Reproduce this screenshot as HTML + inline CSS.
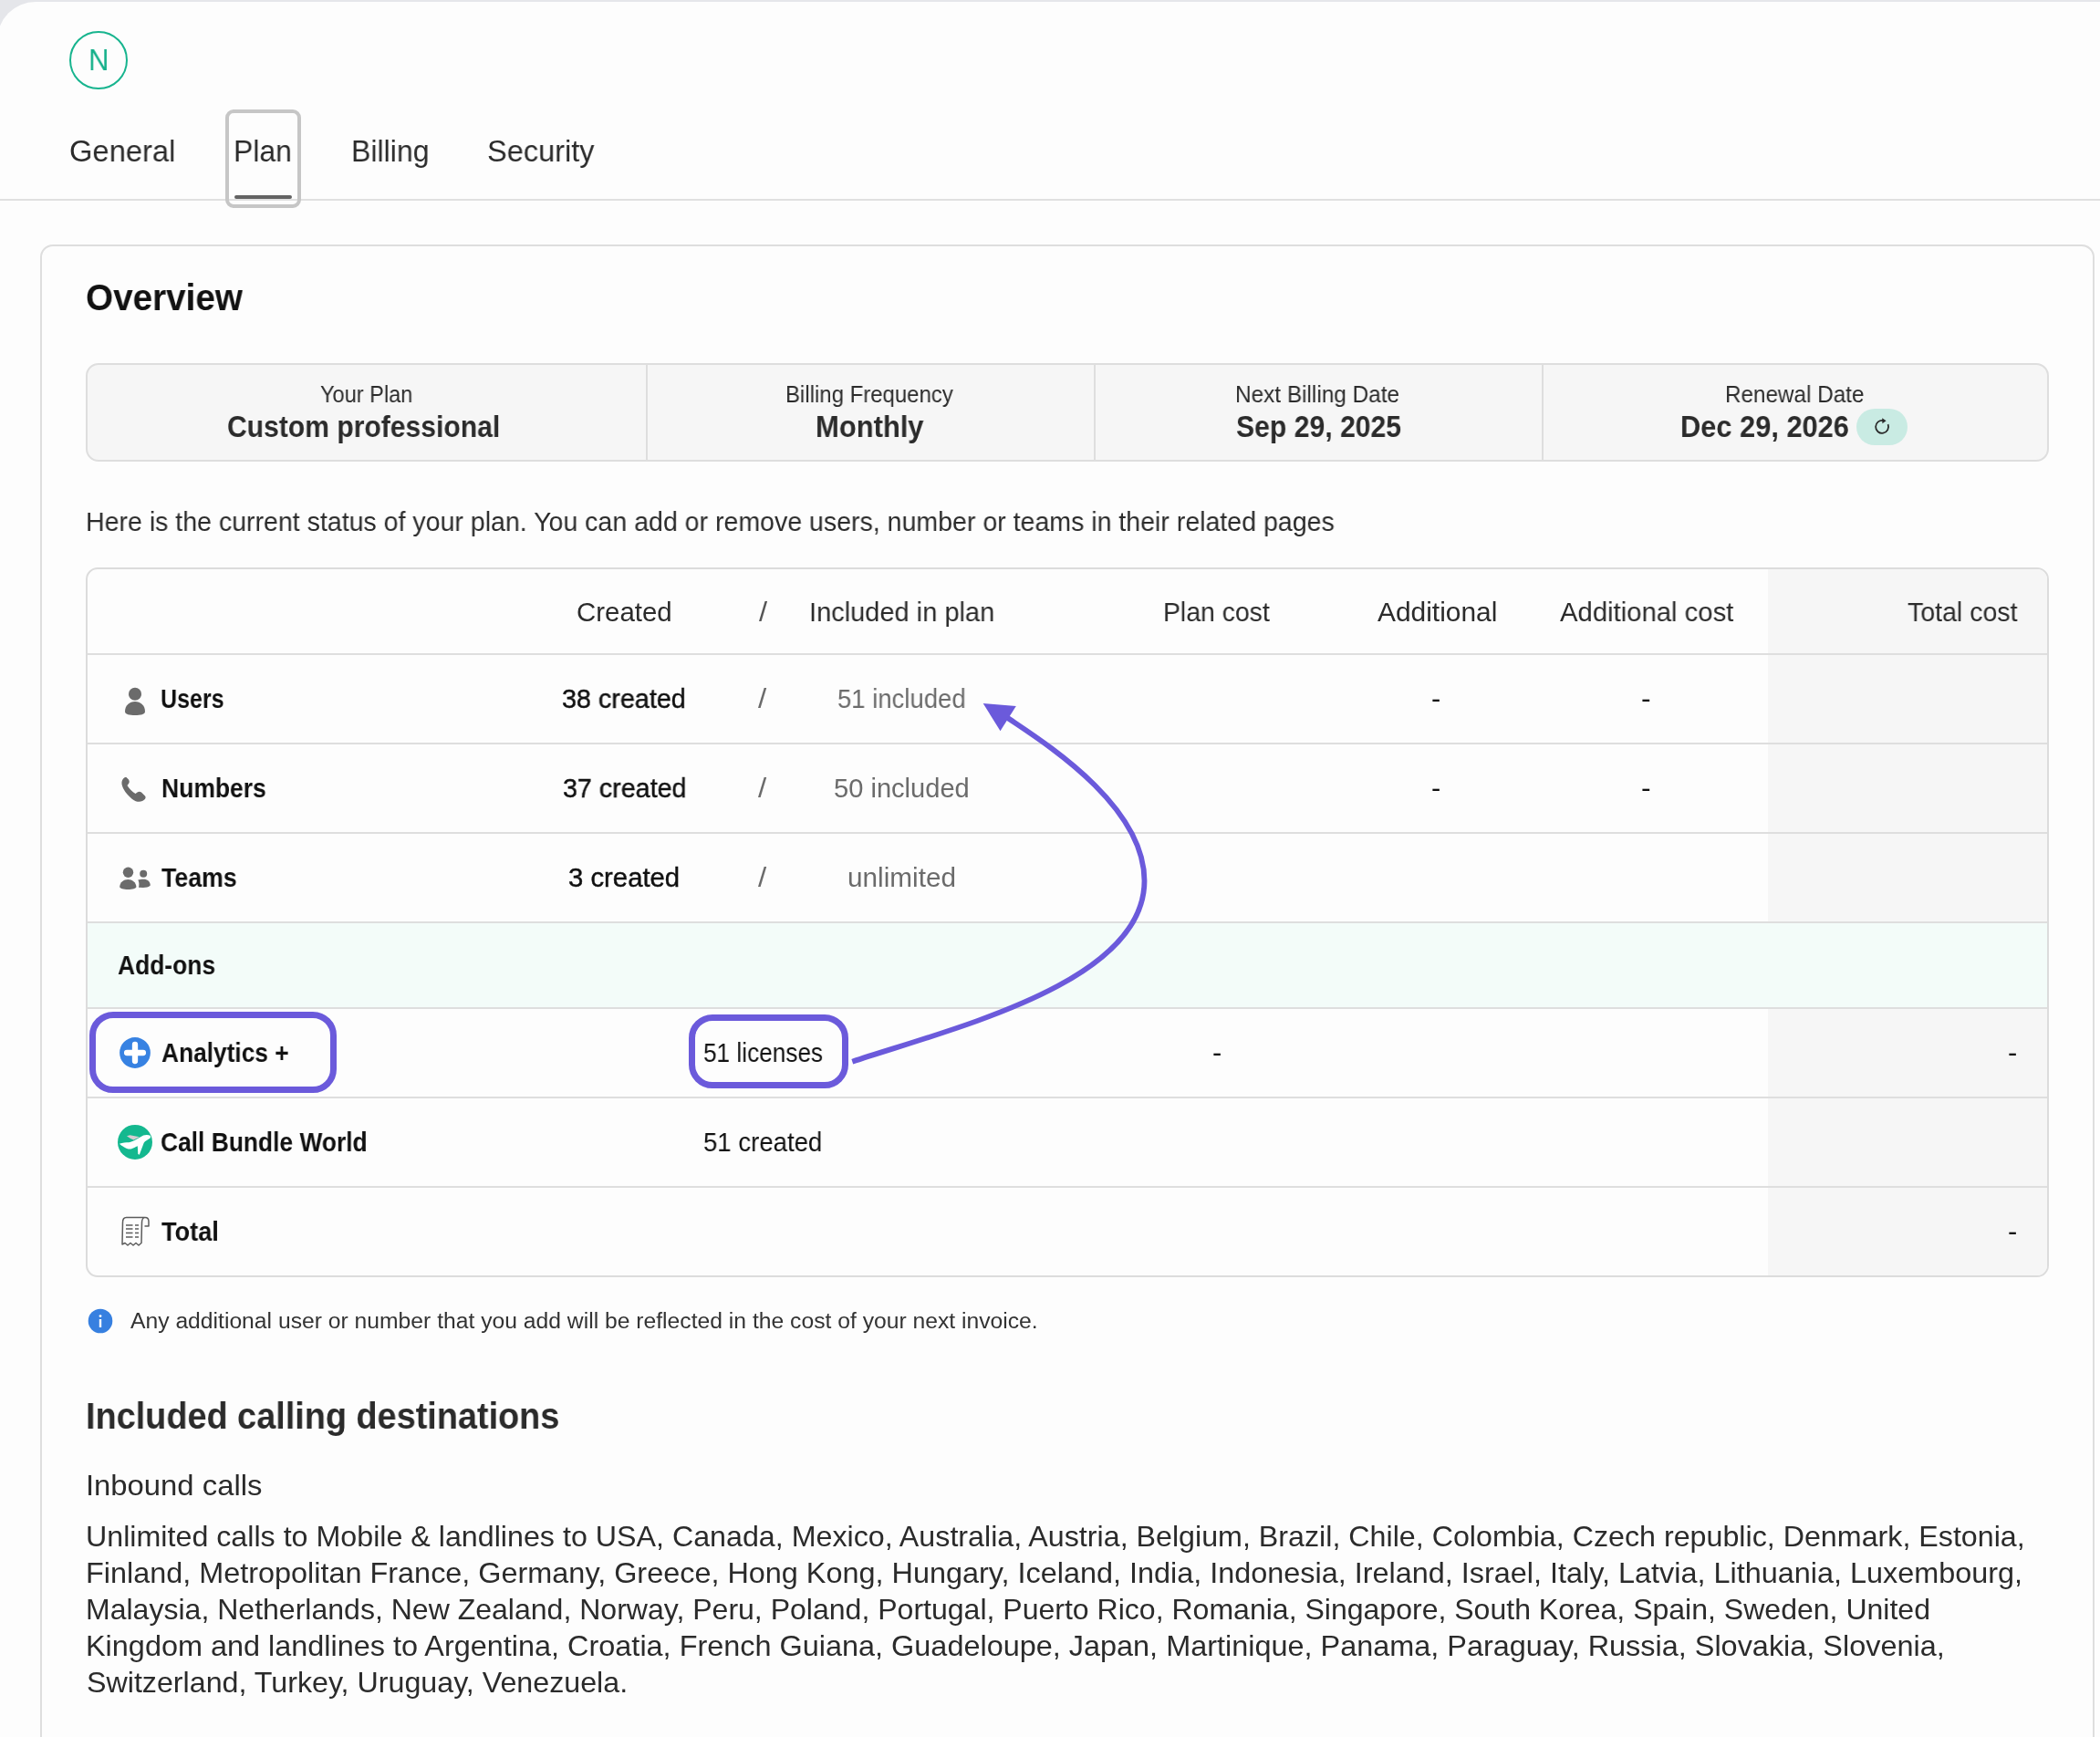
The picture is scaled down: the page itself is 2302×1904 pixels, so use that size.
<!DOCTYPE html>
<html><head><meta charset="utf-8">
<style>
html,body{margin:0;padding:0;}
body{width:2302px;height:1904px;position:relative;overflow:hidden;background:#e5e6ea;font-family:"Liberation Sans",sans-serif;}
.win{position:absolute;left:-3px;top:2px;width:2305px;height:1902px;background:#fdfdfd;border-top-left-radius:42px;overflow:hidden;}
.abs{position:absolute;}
.t{position:absolute;white-space:nowrap;transform-origin:0 0;will-change:transform;font-family:"Liberation Sans",sans-serif;}
.hl{position:absolute;height:2px;background:#dedede;}
</style></head><body>
<div class="win"></div>
<!-- avatar -->
<div class="abs" style="left:76px;top:34px;width:60px;height:60px;border:2px solid #17b48e;border-radius:50%;"></div>
<!-- tab divider -->
<div class="hl" style="left:0;top:218px;width:2302px;background:#e0e0e0;"></div>
<!-- focus box -->
<div class="abs" style="left:247px;top:120px;width:75px;height:100px;border:4px solid #c6c6c6;border-radius:9px;"></div>
<div class="abs" style="left:257px;top:214px;width:63px;height:4px;background:#636363;border-radius:2px;"></div>
<!-- outer card -->
<div class="abs" style="left:44px;top:268px;width:2248px;height:1700px;border:2px solid #dedede;border-radius:14px;"></div>
<!-- summary box -->
<div class="abs" style="left:94px;top:398px;width:2148px;height:104px;border:2px solid #dedede;border-radius:14px;background:#f6f6f6;"></div>
<div class="abs" style="left:708px;top:400px;width:2px;height:104px;background:#dedede;"></div>
<div class="abs" style="left:1199px;top:400px;width:2px;height:104px;background:#dedede;"></div>
<div class="abs" style="left:1690px;top:400px;width:2px;height:104px;background:#dedede;"></div>
<!-- badge -->
<div class="abs" style="left:2035px;top:448px;width:56px;height:40px;border-radius:20px;background:#c9ebe3;"></div>
<svg class="abs" style="left:2043px;top:448px" width="40" height="40" viewBox="0 0 40 40">
  <path d="M26.6,17.2 A7,7 0 1 1 21.6,13.0" fill="none" stroke="#2a2a2a" stroke-width="1.8"/>
  <path d="M20.2,10.2 L24.6,13.3 L20.4,16.2 Z" fill="#2a2a2a"/>
</svg>
<!-- table -->
<div class="abs" style="left:94px;top:622px;width:2148px;height:774px;border:2px solid #dcdcdc;border-radius:13px;overflow:hidden;background:#fdfdfd;">
  <div class="abs" style="left:1842px;top:0;width:306px;height:774px;background:#f6f6f6;"></div>
  <div class="abs" style="left:0;top:388px;width:2148px;height:92px;background:#f3fcf9;"></div>
  <div class="hl" style="left:0;top:92px;width:2148px;"></div>
  <div class="hl" style="left:0;top:190px;width:2148px;"></div>
  <div class="hl" style="left:0;top:288px;width:2148px;"></div>
  <div class="hl" style="left:0;top:386px;width:2148px;"></div>
  <div class="hl" style="left:0;top:480px;width:2148px;"></div>
  <div class="hl" style="left:0;top:578px;width:2148px;"></div>
  <div class="hl" style="left:0;top:676px;width:2148px;"></div>
</div>
<!-- icons -->
<svg class="abs" style="left:0;top:0" width="2302" height="1904" viewBox="0 0 2302 1904">
  <!-- user -->
  <circle cx="148" cy="760.7" r="7" fill="#6b6b6b"/>
  <path d="M137,780 C137,773 142,769 148,769 C154,769 159,773 159,780 C159,783 154,784 148,784 C142,784 137,783 137,780 Z" fill="#6b6b6b"/>
  <!-- phone -->
  <path d="M137,852 C134.5,853.5 133,856 133.5,859.5 C134.5,865 139,871 145,876 C149,879 153,879.5 156,878 C159,876.5 160.5,874.5 159,872.5 L155,868.5 C153.5,867.5 152,867.5 150.5,868.5 L148.5,870 C145,868 141.5,864.5 139.5,861 L141,859 C142,857.5 142,856 141,854.5 L138.5,852 Z" fill="#6b6b6b"/>
  <!-- teams -->
  <circle cx="140.5" cy="956.2" r="5.7" fill="#6b6b6b"/>
  <path d="M131.2,972 C131.5,967 135.5,964 140.3,964 C145,964 149,967 149.4,972 C149.4,974 145,975 140.3,975 C135.5,975 131.2,974 131.2,972 Z" fill="#6b6b6b"/>
  <circle cx="157.2" cy="957.7" r="4" fill="#6b6b6b"/>
  <path d="M151.3,964.5 C153,964 155,963.8 157.5,963.8 C161.5,963.8 164.8,966.5 164.8,970.5 C163,972.3 160,973 157,973 L152,972.8 C152.8,970 152.5,966.5 151.3,964.5 Z" fill="#6b6b6b"/>
  <!-- plus circle -->
  <circle cx="148" cy="1154" r="16.9" fill="#3782e2"/>
  <path d="M148,1145 V1163 M139.1,1154 H156.9" stroke="#fff" stroke-width="6.3" stroke-linecap="round"/>
  <!-- plane circle -->
  <circle cx="148" cy="1251.9" r="19" fill="#14b88f"/>
  <path d="M139,1245.3 L142.5,1244.3 L152.8,1246.3 L146.5,1249.6 L143,1248 Z" fill="#d9cdd2"/>
  <path d="M130.9,1253.8 C134.5,1252.5 138,1252.3 141.2,1252.3 C144,1252 146.5,1250.5 148.8,1249.3 L157.2,1244.4 C160,1243.6 163,1243.7 165,1244.9 L165,1247.2 C163,1248.5 161,1250 158.9,1251.3 L157.7,1252.8 L152.8,1265.7 L151.3,1265 L150.8,1256.3 C148.5,1257.3 146,1258.8 143.7,1259.4 C140.8,1259.8 138,1258.5 136.1,1257.4 C134.2,1256.3 132.3,1255.2 130.9,1253.8 Z" fill="#fff"/>
  <!-- receipt -->
  <g fill="none" stroke="#5c5c5c" stroke-width="1.5" stroke-linejoin="round">
    <path d="M159,1334.5 L138.5,1334.5 C135.5,1334.5 134.5,1337 134.5,1340 L134,1364 L137,1362.5 L140,1365 L143,1362.5 L146,1365 L149,1362.5 L152,1365 L155,1362.5 L155.5,1340 C155.5,1337 157,1334.5 159,1334.5 C161.5,1334.5 163,1336 163,1339 L163,1344 L158.5,1344"/>
    <path d="M138,1343 H145.5 M148,1343 H152 M138,1347 H145.5 M148,1347 H152 M138,1351.5 H145.5 M148,1351.5 H152 M138,1356 H145.5 M148,1356 H152" stroke-width="1.4"/>
  </g>
  <!-- info -->
  <circle cx="110" cy="1448" r="13.3" fill="#3780e0"/>
  <rect x="108.8" y="1446" width="2.4" height="9" fill="#fff"/>
  <circle cx="110" cy="1442.6" r="1.4" fill="#fff"/>
</svg>
<!-- purple boxes -->
<div class="abs" style="left:98px;top:1109px;width:257px;height:75px;border:7px solid #6b5adb;border-radius:26px;"></div>
<div class="abs" style="left:755px;top:1112px;width:161px;height:67px;border:7px solid #6b5adb;border-radius:26px;"></div>
<!-- arrow -->
<svg class="abs" style="left:0;top:0" width="2302" height="1904" viewBox="0 0 2302 1904">
  <path d="M934.3,1163.7 C1044.9,1126.8 1254.5,1077.2 1254.5,965.5 C1254.5,881.7 1142.3,812.5 1104.0,786.5" fill="none" stroke="#6b5adb" stroke-width="5.8"/>
  <path d="M1077.7,770.9 L1113.8,774.1 L1096.5,801.3 Z" fill="#6b5adb"/>
</svg>
<div class="t" style="left:96.69px;top:47.00px;font-size:32.61px;line-height:37px;color:#14b08a;transform:scaleX(0.9526);">N</div>
<div class="t" style="left:76.11px;top:147.10px;font-size:32.9px;line-height:37px;color:#2b2b2b;transform:scaleX(0.9939);">General</div>
<div class="t" style="left:255.96px;top:147.10px;font-size:32.9px;line-height:37px;color:#2b2b2b;transform:scaleX(0.9706);">Plan</div>
<div class="t" style="left:384.75px;top:147.10px;font-size:32.9px;line-height:37px;color:#2b2b2b;transform:scaleX(0.9744);">Billing</div>
<div class="t" style="left:534.21px;top:147.10px;font-size:32.9px;line-height:37px;color:#2b2b2b;transform:scaleX(0.9893);">Security</div>
<div class="t" style="left:94.06px;top:303.00px;font-size:41.01px;line-height:46px;color:#111111;font-weight:700;transform:scaleX(0.9424);">Overview</div>
<div class="t" style="left:351.40px;top:417.50px;font-size:24.93px;line-height:28px;color:#2b2b2b;transform:scaleX(0.9455);">Your Plan</div>
<div class="t" style="left:861.48px;top:417.50px;font-size:24.93px;line-height:28px;color:#2b2b2b;transform:scaleX(0.9610);">Billing Frequency</div>
<div class="t" style="left:1354.44px;top:417.50px;font-size:24.93px;line-height:28px;color:#2b2b2b;transform:scaleX(0.9776);">Next Billing Date</div>
<div class="t" style="left:1890.75px;top:417.50px;font-size:24.93px;line-height:28px;color:#2b2b2b;transform:scaleX(0.9734);">Renewal Date</div>
<div class="t" style="left:248.87px;top:450.00px;font-size:32.32px;line-height:36px;color:#2b2b2b;font-weight:700;transform:scaleX(0.9309);">Custom professional</div>
<div class="t" style="left:894.49px;top:450.00px;font-size:32.32px;line-height:36px;color:#2b2b2b;font-weight:700;transform:scaleX(0.9568);">Monthly</div>
<div class="t" style="left:1354.80px;top:450.00px;font-size:32.32px;line-height:36px;color:#2b2b2b;font-weight:700;transform:scaleX(0.9333);">Sep 29, 2025</div>
<div class="t" style="left:1842.49px;top:450.00px;font-size:32.32px;line-height:36px;color:#2b2b2b;font-weight:700;transform:scaleX(0.9531);">Dec 29, 2026</div>
<div class="t" style="left:93.63px;top:556.40px;font-size:28.99px;line-height:32px;color:#2b2b2b;transform:scaleX(0.9844);">Here is the current status of your plan. You can add or remove users, number or teams in their related pages</div>
<div class="t" style="left:632.40px;top:653.80px;font-size:29.42px;line-height:33px;color:#2b2b2b;">Created</div>
<div class="t" style="left:831.50px;top:653.80px;font-size:29.42px;line-height:33px;color:#555555;transform:scaleX(1.1111);">/</div>
<div class="t" style="left:886.53px;top:653.80px;font-size:29.42px;line-height:33px;color:#2b2b2b;transform:scaleX(0.9864);">Included in plan</div>
<div class="t" style="left:1275.37px;top:653.80px;font-size:29.42px;line-height:33px;color:#2b2b2b;transform:scaleX(0.9656);">Plan cost</div>
<div class="t" style="left:1509.80px;top:653.80px;font-size:29.42px;line-height:33px;color:#2b2b2b;transform:scaleX(1.0171);">Additional</div>
<div class="t" style="left:1710.00px;top:653.80px;font-size:29.42px;line-height:33px;color:#2b2b2b;transform:scaleX(0.9954);">Additional cost</div>
<div class="t" style="left:2091.00px;top:653.80px;font-size:29.42px;line-height:33px;color:#2b2b2b;transform:scaleX(0.9706);">Total cost</div>
<div class="t" style="left:176.44px;top:750.00px;font-size:28.99px;line-height:32px;color:#111111;font-weight:700;transform:scaleX(0.8630);">Users</div>
<div class="t" style="left:616.31px;top:750.00px;font-size:28.99px;line-height:32px;color:#111111;-webkit-text-stroke:0.4px #111111;transform:scaleX(0.9915);">38 created</div>
<div class="t" style="left:831.30px;top:750.00px;font-size:28.99px;line-height:32px;color:#6b6b6b;transform:scaleX(1.1444);">/</div>
<div class="t" style="left:918.05px;top:750.00px;font-size:28.99px;line-height:32px;color:#6b6b6b;transform:scaleX(0.9484);">51 included</div>
<div class="t" style="left:1569.44px;top:750.00px;font-size:28.99px;line-height:32px;color:#111111;transform:scaleX(1.0625);">-</div>
<div class="t" style="left:1799.40px;top:750.00px;font-size:28.99px;line-height:32px;color:#111111;transform:scaleX(1.1000);">-</div>
<div class="t" style="left:176.59px;top:848.00px;font-size:28.99px;line-height:32px;color:#111111;font-weight:700;transform:scaleX(0.9133);">Numbers</div>
<div class="t" style="left:616.61px;top:848.00px;font-size:28.99px;line-height:32px;color:#111111;-webkit-text-stroke:0.4px #111111;transform:scaleX(0.9893);">37 created</div>
<div class="t" style="left:831.30px;top:848.00px;font-size:28.99px;line-height:32px;color:#6b6b6b;transform:scaleX(1.1444);">/</div>
<div class="t" style="left:913.70px;top:848.00px;font-size:28.99px;line-height:32px;color:#6b6b6b;transform:scaleX(1.0031);">50 included</div>
<div class="t" style="left:1569.44px;top:848.00px;font-size:28.99px;line-height:32px;color:#111111;transform:scaleX(1.0625);">-</div>
<div class="t" style="left:1799.40px;top:848.00px;font-size:28.99px;line-height:32px;color:#111111;transform:scaleX(1.1000);">-</div>
<div class="t" style="left:177.00px;top:945.70px;font-size:28.99px;line-height:32px;color:#111111;font-weight:700;transform:scaleX(0.9225);">Teams</div>
<div class="t" style="left:622.99px;top:945.70px;font-size:28.99px;line-height:32px;color:#111111;-webkit-text-stroke:0.4px #111111;transform:scaleX(1.0107);">3 created</div>
<div class="t" style="left:831.30px;top:945.70px;font-size:28.99px;line-height:32px;color:#6b6b6b;transform:scaleX(1.1444);">/</div>
<div class="t" style="left:928.57px;top:945.70px;font-size:28.99px;line-height:32px;color:#6b6b6b;transform:scaleX(1.0257);">unlimited</div>
<div class="t" style="left:128.70px;top:1042.30px;font-size:28.99px;line-height:32px;color:#111111;font-weight:700;transform:scaleX(0.9106);">Add-ons</div>
<div class="t" style="left:176.70px;top:1137.60px;font-size:28.99px;line-height:32px;color:#111111;font-weight:700;transform:scaleX(0.9070);">Analytics +</div>
<div class="t" style="left:770.50px;top:1137.70px;font-size:28.99px;line-height:32px;color:#111111;transform:scaleX(0.9037);">51 licenses</div>
<div class="t" style="left:1328.94px;top:1137.60px;font-size:28.99px;line-height:32px;color:#111111;transform:scaleX(1.0625);">-</div>
<div class="t" style="left:2201.24px;top:1137.60px;font-size:28.99px;line-height:32px;color:#111111;transform:scaleX(1.0625);">-</div>
<div class="t" style="left:176.19px;top:1236.00px;font-size:28.99px;line-height:32px;color:#111111;font-weight:700;transform:scaleX(0.9101);">Call Bundle World</div>
<div class="t" style="left:771.05px;top:1236.20px;font-size:28.99px;line-height:32px;color:#111111;transform:scaleX(0.9514);">51 created</div>
<div class="t" style="left:177.10px;top:1334.00px;font-size:28.99px;line-height:32px;color:#111111;font-weight:700;transform:scaleX(0.9365);">Total</div>
<div class="t" style="left:2201.24px;top:1334.00px;font-size:28.99px;line-height:32px;color:#111111;transform:scaleX(1.0625);">-</div>
<div class="t" style="left:142.90px;top:1434.80px;font-size:23.48px;line-height:26px;color:#333333;transform:scaleX(1.0517);">Any additional user or number that you add will be reflected in the cost of your next invoice.</div>
<div class="t" style="left:93.81px;top:1530.30px;font-size:40.14px;line-height:45px;color:#2b2b2b;font-weight:700;transform:scaleX(0.9432);">Included calling destinations</div>
<div class="t" style="left:93.60px;top:1610.60px;font-size:31.3px;line-height:35px;color:#2b2b2b;transform:scaleX(1.0485);">Inbound calls</div>
<div class="t" style="left:93.60px;top:1667.40px;font-size:30.72px;line-height:35px;color:#2b2b2b;transform:scaleX(1.0489);">Unlimited calls to Mobile &amp; landlines to USA, Canada, Mexico, Australia, Austria, Belgium, Brazil, Chile, Colombia, Czech republic, Denmark, Estonia,</div>
<div class="t" style="left:93.59px;top:1706.90px;font-size:30.72px;line-height:35px;color:#2b2b2b;transform:scaleX(1.0546);">Finland, Metropolitan France, Germany, Greece, Hong Kong, Hungary, Iceland, India, Indonesia, Ireland, Israel, Italy, Latvia, Lithuania, Luxembourg,</div>
<div class="t" style="left:93.61px;top:1746.80px;font-size:30.72px;line-height:35px;color:#2b2b2b;transform:scaleX(1.0427);">Malaysia, Netherlands, New Zealand, Norway, Peru, Poland, Portugal, Puerto Rico, Romania, Singapore, South Korea, Spain, Sweden, United</div>
<div class="t" style="left:93.59px;top:1787.00px;font-size:30.72px;line-height:35px;color:#2b2b2b;transform:scaleX(1.0554);">Kingdom and landlines to Argentina, Croatia, French Guiana, Guadeloupe, Japan, Martinique, Panama, Paraguay, Russia, Slovakia, Slovenia,</div>
<div class="t" style="left:94.65px;top:1827.00px;font-size:30.72px;line-height:35px;color:#2b2b2b;transform:scaleX(1.0484);">Switzerland, Turkey, Uruguay, Venezuela.</div>
</body></html>
